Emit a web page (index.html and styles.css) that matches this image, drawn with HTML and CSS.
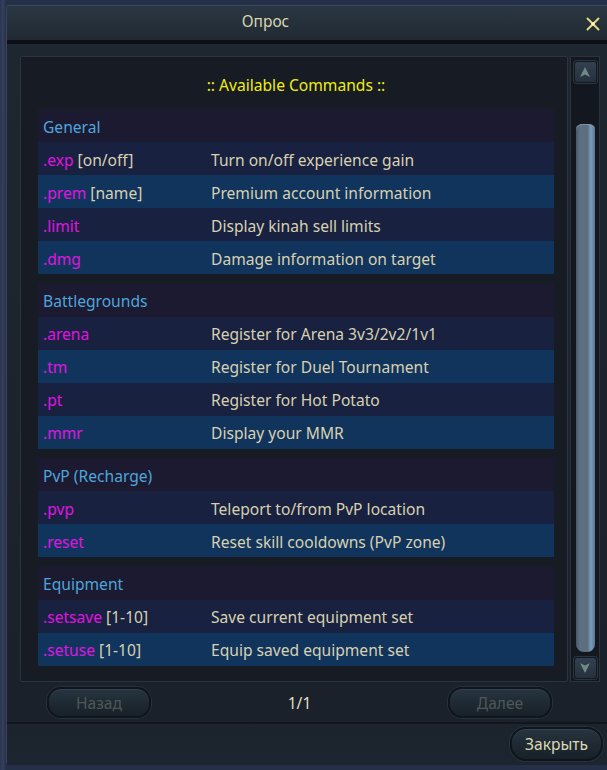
FILE: index.html
```html
<!DOCTYPE html>
<html>
<head>
<meta charset="utf-8">
<link rel="stylesheet" href="styles.css">
</head>
<body>
<div class="window">
  <div class="titlebar">
    <span class="title">Опрос</span>
    <span class="close">
      <svg width="14" height="14" viewBox="0 0 14 14"><path d="M1.5 1.5 L12.5 12.5 M12.5 1.5 L1.5 12.5" stroke="#e1d97f" stroke-width="2" stroke-linecap="round"/><circle cx="7" cy="7" r="1.8" fill="#fff8c0"/></svg>
    </span>
  </div>
  <div class="divider"></div>
  <div class="body">
    <div class="content">
      <div class="panel">
        <div class="heading">:: Available Commands ::</div>
        <div class="section">
          <div class="row head"><span class="sec">General</span></div>
          <div class="row odd"><span class="cmd"><b>.exp</b> [on/off]</span><span class="desc">Turn on/off experience gain</span></div>
          <div class="row even"><span class="cmd"><b>.prem</b> [name]</span><span class="desc">Premium account information</span></div>
          <div class="row odd"><span class="cmd"><b>.limit</b></span><span class="desc">Display kinah sell limits</span></div>
          <div class="row even"><span class="cmd"><b>.dmg</b></span><span class="desc">Damage information on target</span></div>
        </div>
        <div class="section">
          <div class="row head"><span class="sec">Battlegrounds</span></div>
          <div class="row odd"><span class="cmd"><b>.arena</b></span><span class="desc">Register for Arena 3v3/2v2/1v1</span></div>
          <div class="row even"><span class="cmd"><b>.tm</b></span><span class="desc">Register for Duel Tournament</span></div>
          <div class="row odd"><span class="cmd"><b>.pt</b></span><span class="desc">Register for Hot Potato</span></div>
          <div class="row even"><span class="cmd"><b>.mmr</b></span><span class="desc">Display your MMR</span></div>
        </div>
        <div class="section">
          <div class="row head"><span class="sec">PvP (Recharge)</span></div>
          <div class="row odd"><span class="cmd"><b>.pvp</b></span><span class="desc">Teleport to/from PvP location</span></div>
          <div class="row even"><span class="cmd"><b>.reset</b></span><span class="desc">Reset skill cooldowns (PvP zone)</span></div>
        </div>
        <div class="section">
          <div class="row head"><span class="sec">Equipment</span></div>
          <div class="row odd"><span class="cmd"><b>.setsave</b> [1-10]</span><span class="desc">Save current equipment set</span></div>
          <div class="row even"><span class="cmd"><b>.setuse</b> [1-10]</span><span class="desc">Equip saved equipment set</span></div>
        </div>
      </div>
      <div class="scrollbar">
        <div class="sbtn">
          <svg width="12" height="12" viewBox="0 0 12 12"><path d="M6 1 L11 11 L6 8.5 L1 11 Z" fill="#6f8a86"/></svg>
        </div>
        <div class="track"><div class="thumb"></div></div>
        <div class="sbtn">
          <svg width="12" height="12" viewBox="0 0 12 12"><path d="M6 11 L11 1 L6 3.5 L1 1 Z" fill="#6f8a86"/></svg>
        </div>
      </div>
    </div>
    <div class="pager">
      <button class="btn disabled">Назад</button>
      <span class="page">1/1</span>
      <button class="btn disabled">Далее</button>
    </div>
  </div>
  <div class="footer">
    <button class="btn close-btn">Закрыть</button>
  </div>
</div>
</body>
</html>
```

FILE: styles.css
```css
html, body {
  margin: 0;
  padding: 0;
}
body {
  width: 607px;
  height: 770px;
  overflow: hidden;
  background: linear-gradient(90deg, #2b3552 0, #34405e 3px, #262f48 6px);
  font-family: "Noto Sans", "Open Sans", sans-serif;
  font-size: 15.6px;
}
.window {
  margin: 5px 0 0 6px;
  width: 604px;
  height: 760px;
  background: linear-gradient(180deg, #1f2833 0, #1b222c 100%);
  border-left: 1px solid #3a4658;
  border-radius: 4px 0 0 4px;
  box-sizing: border-box;
  display: flex;
  flex-direction: column;
}
.titlebar {
  height: 35px;
  flex: none;
  display: flex;
  align-items: center;
  justify-content: center;
  position: relative;
  background: linear-gradient(180deg, #2a3642 0, #25303a 50%, #212a33 100%);
  border-top: 1px solid #3b4a58;
  box-sizing: border-box;
  padding: 0 86px 4px 0;
}
.title {
  color: #d9d5b3;
  font-size: 15.5px;
}
.close {
  position: absolute;
  right: 10px;
  top: 8px;
  width: 14px;
  height: 14px;
}
.divider {
  height: 4px;
  flex: none;
  background: #0c1016;
}
.body {
  flex: none;
  padding: 12px 0 0 13px;
  background: linear-gradient(180deg, #1e2630 0, #1a212a 100%);
  border-bottom: 2px solid #11161c;
  height: 680px;
  box-sizing: border-box;
}
.content {
  display: flex;
  gap: 2px;
  height: 626px;
}
.panel {
  width: 548px;
  box-sizing: border-box;
  background: #161b24;
  border: 1px solid #2a3440;
  border-radius: 2px;
  padding: 0 13px 0 17px;
}
.heading {
  height: 52px;
  line-height: 56px;
  text-align: center;
  color: #f1ee0f;
}
.section + .section {
  margin-top: 9.5px;
}
.row {
  height: 33px;
  box-sizing: border-box;
  display: flex;
  align-items: center;
  padding: 2px 0 0 5px;
  color: #d8d1b1;
}
.row.head {
  background: #1b1a31;
}
.row.odd {
  background: #182140;
}
.row.even {
  background: #11345d;
}
.sec {
  color: #4ea6dc;
}
.cmd {
  width: 168px;
  flex: none;
}
.cmd b {
  font-weight: normal;
  color: #e014e0;
}
.desc {
  color: #d8d1b1;
}
.scrollbar {
  width: 30px;
  box-sizing: border-box;
  border: 1px solid #2a323c;
  background: #131820;
  display: flex;
  flex-direction: column;
  align-items: center;
  padding: 4px 0 2px;
}
.sbtn {
  width: 23px;
  height: 22px;
  flex: none;
  box-sizing: border-box;
  border: 1px solid #121820;
  border-radius: 3px;
  background: linear-gradient(180deg, #334050 0, #27313d 100%);
  box-shadow: 0 0 0 1px #2c3642;
  display: flex;
  align-items: center;
  justify-content: center;
}
.track {
  flex: 1;
  width: 100%;
  display: flex;
  justify-content: center;
  padding: 41px 0 5px;
  box-sizing: border-box;
}
.thumb {
  width: 19px;
  margin-left: 1px;
  border-radius: 7px 7px 8px 8px / 5px 5px 8px 8px;
  background: linear-gradient(90deg, #46586a 0, #5d7082 20%, #5b6d7e 60%, #7a9dbd 78%, #5a7590 100%);
  box-shadow: inset 0 1px 0 #7d92a6;
}
.pager {
  height: 41px;
  display: flex;
  align-items: center;
  padding: 0 0 0 27px;
  width: 505px;
  justify-content: space-between;
}
.btn {
  font-family: "Noto Sans", "Open Sans", sans-serif;
  font-size: 15.6px;
  height: 31px;
  border-radius: 14px;
  border: 2px solid #0f151b;
  background: linear-gradient(180deg, #27343f 0, #1d2831 60%, #18212a 100%);
  box-shadow: inset 0 1px 0 #34434f, 0 0 0 1px #27313b;
  padding: 0;
  cursor: default;
}
.btn.disabled {
  width: 104px;
  color: #4d5856;
}
.page {
  color: #e3dfc4;
}
.footer {
  flex: 1;
  display: flex;
  justify-content: flex-end;
  align-items: flex-start;
  padding: 3px 7px 0 0;
  background: linear-gradient(180deg, #1b232c 0, #1d2530 100%);
}
.close-btn {
  width: 93px;
  height: 34px;
  border-radius: 16px;
  color: #dcd8b5;
}
```
